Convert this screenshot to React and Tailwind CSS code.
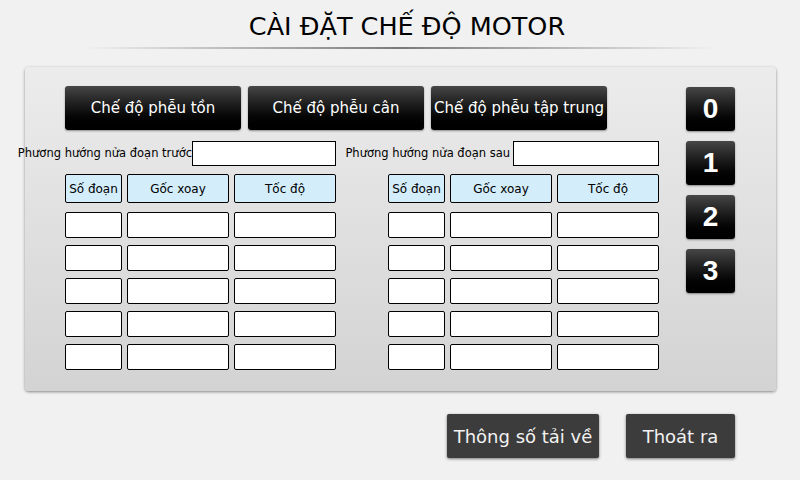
import React from "react";

const F = { fontFamily: '"DejaVu Sans", "Noto Sans", sans-serif' };

function TopBtn({ children }) {
  return (
    <div className="w-[176px] h-[44px] rounded-[3px] bg-gradient-to-b from-[#474747] via-[#161616] to-black shadow-[0_1px_2px_rgba(0,0,0,0.4)] flex items-center justify-center text-white text-[15px] whitespace-nowrap">
      {children}
    </div>
  );
}

function NumBtn({ children }) {
  return (
    <div
      className="w-[49px] h-[44px] rounded-[3px] bg-gradient-to-b from-[#474747] via-[#161616] to-black shadow-[0_1px_2px_rgba(0,0,0,0.4)] flex items-center justify-center text-white text-[28px] font-bold"
      style={{ fontFamily: '"Liberation Sans", Arial, sans-serif' }}
    >
      {children}
    </div>
  );
}

function Cell({ w, head, children }) {
  return (
    <div
      className={`${w} ${head ? "h-[29px] bg-[#d3edfb]" : "h-[26px] bg-white"} border-[1.5px] border-black rounded-[2px] flex items-center justify-center text-[12px] text-black`}
    >
      {children}
    </div>
  );
}

function Table() {
  const rows = [0, 1, 2, 3, 4];
  return (
    <div className="flex flex-col">
      <div className="flex gap-[5px]">
        <Cell w="w-[57px]" head>Số đoạn</Cell>
        <Cell w="w-[102px]" head>Gốc xoay</Cell>
        <Cell w="w-[102px]" head>Tốc độ</Cell>
      </div>
      <div className="flex flex-col gap-[7px] mt-[9px]">
        {rows.map((r) => (
          <div key={r} className="flex gap-[5px]">
            <Cell w="w-[57px]" />
            <Cell w="w-[102px]" />
            <Cell w="w-[102px]" />
          </div>
        ))}
      </div>
    </div>
  );
}

export default function App() {
  return (
    <div className="w-[800px] h-[480px] bg-[#f1f1f1] overflow-hidden flex flex-col" style={F}>
      <div className="h-[47px] flex items-center justify-center pt-[6px] pl-[14px]">
        <div className="text-[25.5px] text-black">CÀI ĐẶT CHẾ ĐỘ MOTOR</div>
      </div>
      <div className="mx-auto w-[630px] h-[2px] bg-gradient-to-r from-transparent via-[#7a7a7a] to-transparent" />
      <div className="ml-[25px] mt-[18px] w-[751px] h-[324px] rounded-[4px] bg-gradient-to-b from-[#ececec] to-[#d3d3d3] shadow-[0_1px_3px_rgba(0,0,0,0.45)] flex pt-[19px] pl-[40px]">
        <div className="flex flex-col w-[594px]">
          <div className="flex gap-[7px]">
            <TopBtn>Chế độ phễu tồn</TopBtn>
            <TopBtn>Chế độ phễu cân</TopBtn>
            <TopBtn>Chế độ phễu tập trung</TopBtn>
          </div>
          <div className="flex gap-[52px] mt-[11px]">
            <div className="w-[271px] flex justify-end items-center">
              <span className="shrink-0 whitespace-nowrap text-[11.5px] text-black">Phương hướng nửa đoạn trước</span>
              <div className="shrink-0 w-[144px] h-[25px] bg-white border border-black" />
            </div>
            <div className="w-[271px] flex justify-end items-center gap-[3px]">
              <span className="shrink-0 whitespace-nowrap text-[11.5px] text-black">Phương hướng nửa đoạn sau</span>
              <div className="shrink-0 w-[146px] h-[25px] bg-white border border-black" />
            </div>
          </div>
          <div className="flex gap-[52px] mt-[8px]">
            <Table />
            <Table />
          </div>
        </div>
        <div className="ml-[27px] pt-[1px] flex flex-col gap-[10px]">
          <NumBtn>0</NumBtn>
          <NumBtn>1</NumBtn>
          <NumBtn>2</NumBtn>
          <NumBtn>3</NumBtn>
        </div>
      </div>
      <div className="flex mt-[23px] pl-[447px] gap-[27px]">
        <div className="w-[152px] h-[44px] rounded-[2px] bg-[#3c3c3c] shadow-[0_1px_3px_rgba(0,0,0,0.5)] flex items-center justify-center text-[#f2f2f2] text-[18px] whitespace-nowrap">
          Thông số tải về
        </div>
        <div className="w-[109px] h-[44px] rounded-[2px] bg-[#3c3c3c] shadow-[0_1px_3px_rgba(0,0,0,0.5)] flex items-center justify-center text-[#f2f2f2] text-[18px] whitespace-nowrap">
          Thoát ra
        </div>
      </div>
    </div>
  );
}
